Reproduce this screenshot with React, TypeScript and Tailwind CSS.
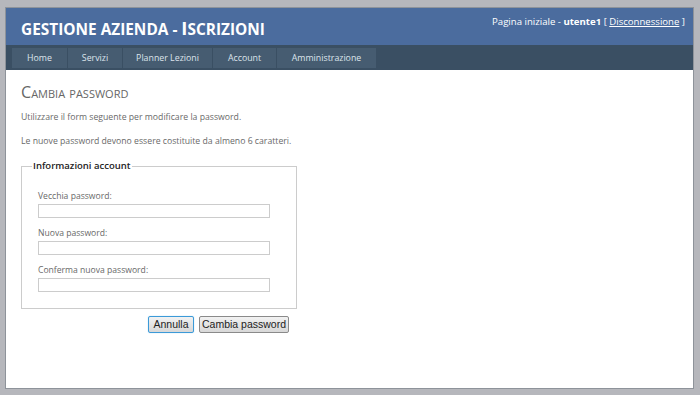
import React from 'react';

const menu = [
  { label: 'Home', w: 'w-[55px]' },
  { label: 'Servizi', w: 'w-[54px]' },
  { label: 'Planner Lezioni', w: 'w-[89px]' },
  { label: 'Account', w: 'w-[63px]' },
  { label: 'Amministrazione', w: 'w-[99px]' },
];

const fields = [
  { id: 'old', label: 'Vecchia password:' },
  { id: 'new', label: 'Nuova password:' },
  { id: 'confirm', label: 'Conferma nuova password:' },
];

export default function App() {
  return (
    <div className="w-[700px] h-[395px] bg-[#b6b7bc] pt-[7px] px-[5px] overflow-hidden font-['Open_Sans',sans-serif] text-[#696969]">
      <div className="w-[689px] h-[382px] bg-white border border-[#8e939a] flex flex-col">
        {/* header */}
        <div className="h-[37px] bg-[#4b6c9e] flex justify-between">
          <h1 className="pl-[15px] pt-[10px] text-[15.4px] leading-[20px] font-bold text-white">
            GESTIONE AZIENDA - <span className="text-[18.5px]">I</span>SCRIZIONI
          </h1>
          <div className="pr-[8px] pt-[7px] text-[9.6px] leading-[14px] text-white">
            Pagina iniziale - <span className="font-bold">utente1</span> [ <a className="underline">Disconnessione</a> ]
          </div>
        </div>

        {/* menu */}
        <div className="h-[25px] bg-[#3a4f63] flex items-start pl-[6px] pt-[3px] gap-px">
          {menu.map(item => (
            <div key={item.label} className={`${item.w} h-[20px] bg-[#465c71] text-[#dde4ec] text-[8.8px] leading-[20px] text-center`}>
              {item.label}
            </div>
          ))}
        </div>

        {/* content */}
        <div className="pl-[15px] pt-[13px]">
          <h2 className="text-[16.1px] leading-[18px] text-[#666] [font-variant:small-caps]">Cambia password</h2>
          <p className="mt-[10px] text-[8.7px] leading-[12px]">Utilizzare il form seguente per modificare la password.</p>
          <p className="mt-[12px] text-[8.7px] leading-[12px]">Le nuove password devono essere costituite da almeno 6 caratteri.</p>

          <fieldset className="mt-[12px] w-[276px] border border-[#cccccc] px-[16px] pb-[16px]">
            <legend className="-ml-[6px] px-[1px] text-[9.5px] leading-[14px] font-semibold text-[#222]">Informazioni account</legend>
            {fields.map((f, i) => (
              <div key={f.id} className={i === 0 ? 'mt-[17px]' : 'mt-[9px]'}>
                <label className="block text-[8.6px] leading-[12px]">{f.label}</label>
                <input type="password" className="block mt-[2px] w-[232px] h-[14px] border border-[#cccccc] bg-white" />
              </div>
            ))}
          </fieldset>

          <div className="w-[276px] mt-[7px] pr-[8px] flex justify-end gap-[5px] font-['Liberation_Sans',sans-serif] text-[10.5px] text-[#222]">
            <button className="h-[17px] w-[46px] border border-[#3c9ad8] rounded-[2px] bg-gradient-to-b from-[#f2f2f2] to-[#d8d8d8] leading-[15px] shadow-[0_0_1px_#7cc0ec]">
              Annulla
            </button>
            <button className="h-[17px] w-[90px] border border-[#8a8a8a] rounded-[2px] bg-gradient-to-b from-[#f2f2f2] to-[#d8d8d8] leading-[15px]">
              Cambia password
            </button>
          </div>
        </div>
      </div>
    </div>
  );
}
